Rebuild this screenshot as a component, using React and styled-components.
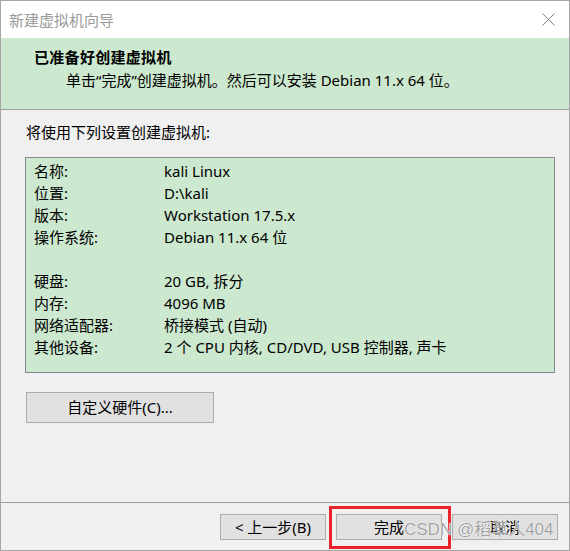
import React from "react";
import styled, { createGlobalStyle } from "styled-components";

const Global = createGlobalStyle`
  html, body { margin: 0; padding: 0; background: #ffffff; }
  * { box-sizing: border-box; }
  body {
    font-family: "Noto Sans", "Noto Sans CJK SC", sans-serif;
    font-size: 15px;
    color: #000;
  }
`;

const Window = styled.div`
  width: 570px;
  height: 551px;
  border: 1px solid #a6a6a6;
  display: flex;
  flex-direction: column;
  background: #f0f0f0;
  position: relative;
`;

const TitleBar = styled.div`
  height: 37px;
  background: #ffffff;
  display: flex;
  align-items: center;
  justify-content: space-between;
  padding: 0 14px 0 8px;
`;

const TitleText = styled.div`
  color: #9a9a9a;
  font-size: 15px;
  line-height: 22px;
`;

const Header = styled.div`
  height: 72px;
  background: #cce8cf;
  border-bottom: 1px solid #a0a0a0;
  padding: 8px 0 0 33px;
`;

const HeaderTitle = styled.div`
  font-weight: 700;
  font-size: 15px;
  line-height: 22px;
  letter-spacing: 0.3px;
`;

const HeaderSub = styled.div`
  font-size: 15px;
  line-height: 22px;
  margin-top: 1px;
  padding-left: 32px;
`;

const Body = styled.div`
  flex: 1;
  padding: 11px 14px 0 24px;
`;

const Intro = styled.div`
  line-height: 22px;
  margin-left: 1px;
`;

const InfoBox = styled.div`
  margin-top: 14px;
  height: 216px;
  border: 1px solid #828790;
  background: #cce8cf;
  padding: 2px 8px 0 8px;
`;

const Row = styled.div`
  display: flex;
  height: 22px;
  line-height: 22px;
`;

const Label = styled.div`
  width: 130px;
  flex: none;
`;

const Value = styled.div`
  white-space: nowrap;
`;

const Button = styled.button`
  font-family: "Noto Sans", "Noto Sans CJK SC", sans-serif;
  font-size: 15px;
  color: #000;
  background: #e1e1e1;
  border: 1px solid #adadad;
  border-radius: 0;
  padding: 0;
  width: ${(p) => p.$w}px;
  height: ${(p) => p.$h}px;
  display: flex;
  align-items: center;
  justify-content: center;
  position: relative;
  line-height: 1;
`;

const CustomWrap = styled.div`
  margin-top: 19px;
  margin-left: 1px;
`;

const Footer = styled.div`
  height: 48px;
  border-top: 1px solid #a0a0a0;
  display: flex;
  justify-content: flex-end;
  gap: 10px;
  padding: 11px 11px 0 0;
`;

const Highlight = styled.div`
  position: absolute;
  left: -8px;
  right: -10px;
  top: -9px;
  bottom: -10px;
  border: 3px solid #e8232b;
  pointer-events: none;
`;

const Watermark = styled.div`
  position: absolute;
  left: 403px;
  top: 518px;
  font-family: "Liberation Sans", "Noto Sans CJK SC", sans-serif;
  font-size: 17px;
  line-height: 22px;
  color: rgba(120, 120, 120, 0.7);
  text-shadow: 0 0 1px #fff, 0 0 1px #fff;
  white-space: nowrap;
  pointer-events: none;
`;

const rows = [
  ["名称:", "kali Linux"],
  ["位置:", "D:\\kali"],
  ["版本:", "Workstation 17.5.x"],
  ["操作系统:", "Debian 11.x 64 位"],
  ["", ""],
  ["硬盘:", "20 GB, 拆分"],
  ["内存:", "4096 MB"],
  ["网络适配器:", "桥接模式 (自动)"],
  ["其他设备:", "2 个 CPU 内核, CD/DVD, USB 控制器, 声卡"],
];

function CloseIcon() {
  return (
    <svg width="13" height="13" viewBox="0 0 13 13">
      <path d="M0.5 0.5 L12.5 12.5 M12.5 0.5 L0.5 12.5" stroke="#7a7a7a" strokeWidth="1" fill="none" />
    </svg>
  );
}

export default function App() {
  return (
    <>
      <Global />
      <Window>
        <TitleBar>
          <TitleText>新建虚拟机向导</TitleText>
          <CloseIcon />
        </TitleBar>
        <Header>
          <HeaderTitle>已准备好创建虚拟机</HeaderTitle>
          <HeaderSub>单击“完成”创建虚拟机。然后可以安装 Debian 11.x 64 位。</HeaderSub>
        </Header>
        <Body>
          <Intro>将使用下列设置创建虚拟机:</Intro>
          <InfoBox>
            {rows.map(([l, v], i) => (
              <Row key={i}>
                <Label>{l}</Label>
                <Value>{v}</Value>
              </Row>
            ))}
          </InfoBox>
          <CustomWrap>
            <Button $w={188} $h={31}>自定义硬件(C)...</Button>
          </CustomWrap>
        </Body>
        <Footer>
          <Button $w={106} $h={26}>&lt; 上一步(B)</Button>
          <Button $w={106} $h={26}>
            完成
            <Highlight />
          </Button>
          <Button $w={106} $h={26}>取消</Button>
        </Footer>
        <Watermark>CSDN @稻草人404</Watermark>
      </Window>
    </>
  );
}
